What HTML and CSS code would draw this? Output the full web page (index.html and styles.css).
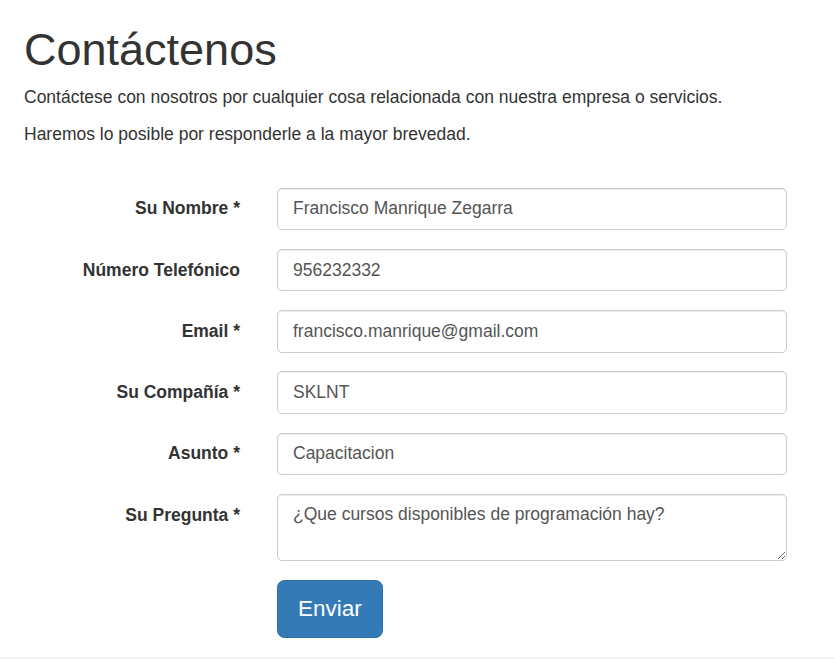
FILE: index.html
```html
<!DOCTYPE html>
<html lang="es">
<head>
<meta charset="utf-8">
<title>Contáctenos</title>
<link rel="stylesheet" href="styles.css">
</head>
<body>
<div class="container">
  <h1 class="title">Contáctenos</h1>
  <p class="lead-text">Contáctese con nosotros por cualquier cosa relacionada con nuestra empresa o servicios.</p>
  <p class="lead-text">Haremos lo posible por responderle a la mayor brevedad.</p>

  <form class="contact-form">
    <div class="form-row">
      <label class="control-label" for="nombre">Su Nombre *</label>
      <input class="form-control" id="nombre" type="text" value="Francisco Manrique Zegarra">
    </div>
    <div class="form-row">
      <label class="control-label" for="tel">Número Telefónico</label>
      <input class="form-control" id="tel" type="text" value="956232332">
    </div>
    <div class="form-row">
      <label class="control-label" for="email">Email *</label>
      <input class="form-control" id="email" type="text" value="francisco.manrique@gmail.com">
    </div>
    <div class="form-row">
      <label class="control-label" for="comp">Su Compañía *</label>
      <input class="form-control" id="comp" type="text" value="SKLNT">
    </div>
    <div class="form-row">
      <label class="control-label" for="asunto">Asunto *</label>
      <input class="form-control" id="asunto" type="text" value="Capacitacion">
    </div>
    <div class="form-row">
      <label class="control-label" for="preg">Su Pregunta *</label>
      <textarea class="form-control textarea" id="preg" rows="2">¿Que cursos disponibles de programación hay?</textarea>
    </div>
    <div class="form-row last-row">
      <span></span>
      <div><button type="button" class="btn">Enviar</button></div>
    </div>
  </form>
</div>
<div class="footer"></div>
</body>
</html>
```
FILE: styles.css
```css
html, body {
  margin: 0;
  padding: 0;
  background: #fff;
}
body {
  font-family: "Liberation Sans", Arial, sans-serif;
  font-size: 17.5px;
  line-height: 25px;
  color: #333;
}
.container {
  padding: 0 24px;
}
.title {
  font-family: "Liberation Sans", Arial, sans-serif;
  font-weight: 500;
  font-size: 45px;
  line-height: 49.5px;
  margin: 25px 0 10px;
  color: #333;
}
.lead-text {
  margin: 0 0 12.5px;
}
.contact-form {
  padding-top: 28px;
}
.form-row {
  display: grid;
  grid-template-columns: 216px 510px;
  column-gap: 37px;
  margin-bottom: 18.75px;
}
.last-row {
  margin-bottom: 19.5px;
}
.control-label {
  text-align: right;
  font-weight: 700;
  padding-top: 8.75px;
  line-height: 25px;
}
.form-control {
  display: block;
  box-sizing: border-box;
  width: 100%;
  height: 42.5px;
  padding: 7.5px 15px;
  font-family: "Liberation Sans", Arial, sans-serif;
  font-size: 17.5px;
  line-height: 25px;
  color: #555;
  background: #fff;
  border: 1px solid #ccc;
  border-radius: 5px;
  box-shadow: inset 0 1px 1px rgba(0,0,0,.075);
  margin: 0;
}
.textarea {
  height: 67.5px;
  resize: vertical;
}
.btn {
  display: inline-block;
  box-sizing: border-box;
  height: 57.5px;
  padding: 12.5px 20px;
  font-family: "Liberation Sans", Arial, sans-serif;
  font-size: 22.5px;
  line-height: 30px;
  color: #fff;
  background: #337ab7;
  border: 1px solid #2e6da4;
  border-radius: 7.5px;
  cursor: pointer;
  margin: 0;
}
.footer {
  height: 20px;
  background: #f5f5f5;
  border-top: 1px solid #eee;
}
```
